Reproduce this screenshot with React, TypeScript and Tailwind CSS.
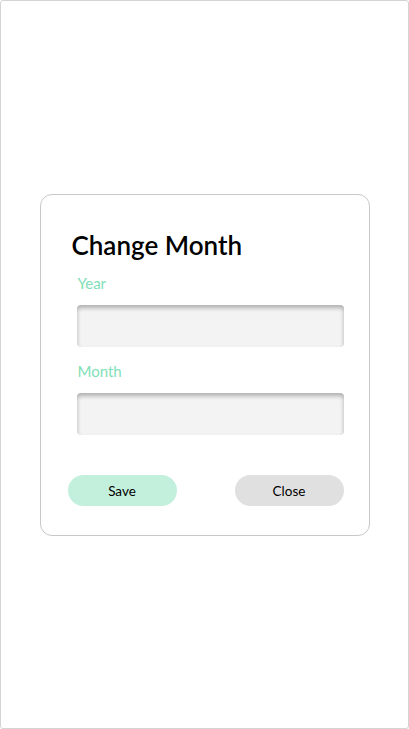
import React from "react";

export default function App() {
  const font = { fontFamily: "Lato, 'Noto Sans', sans-serif" };
  return (
    <div className="w-[409px] h-[729px] bg-white" style={font}>
      <div className="w-full h-full border border-[#d4d4d4] rounded-[3px] flex items-center justify-center">
        <div className="w-[330px] h-[342px] border border-[#c8c8c8] rounded-[12px] bg-white flex flex-col">
          <h1 className="mt-[34px] ml-[31px] text-[26px] leading-[32px] font-semibold text-black tracking-[0px]">
            Change Month
          </h1>
          <label className="mt-[12px] ml-[37px] text-[15px] leading-[20px] text-[#7fe0b8]">Year</label>
          <div className="mt-[12px] ml-[36px] w-[267px] h-[42px] rounded-[4px] bg-[#f3f3f3] shadow-[inset_0_3px_4px_rgba(0,0,0,0.28)]" />
          <label className="mt-[14px] ml-[37px] text-[15px] leading-[20px] text-[#7fe0b8]">Month</label>
          <div className="mt-[12px] ml-[36px] w-[267px] h-[42px] rounded-[4px] bg-[#f3f3f3] shadow-[inset_0_3px_4px_rgba(0,0,0,0.28)]" />
          <div className="mt-[40px] ml-[27px] mr-[25px] flex justify-between">
            <button className="w-[109px] h-[31px] pt-[3px] rounded-full bg-[#c3f0dc] text-[13.5px] text-black">Save</button>
            <button className="w-[109px] h-[31px] pt-[3px] rounded-full bg-[#e0e0e0] text-[13.5px] text-black">Close</button>
          </div>
        </div>
      </div>
    </div>
  );
}
